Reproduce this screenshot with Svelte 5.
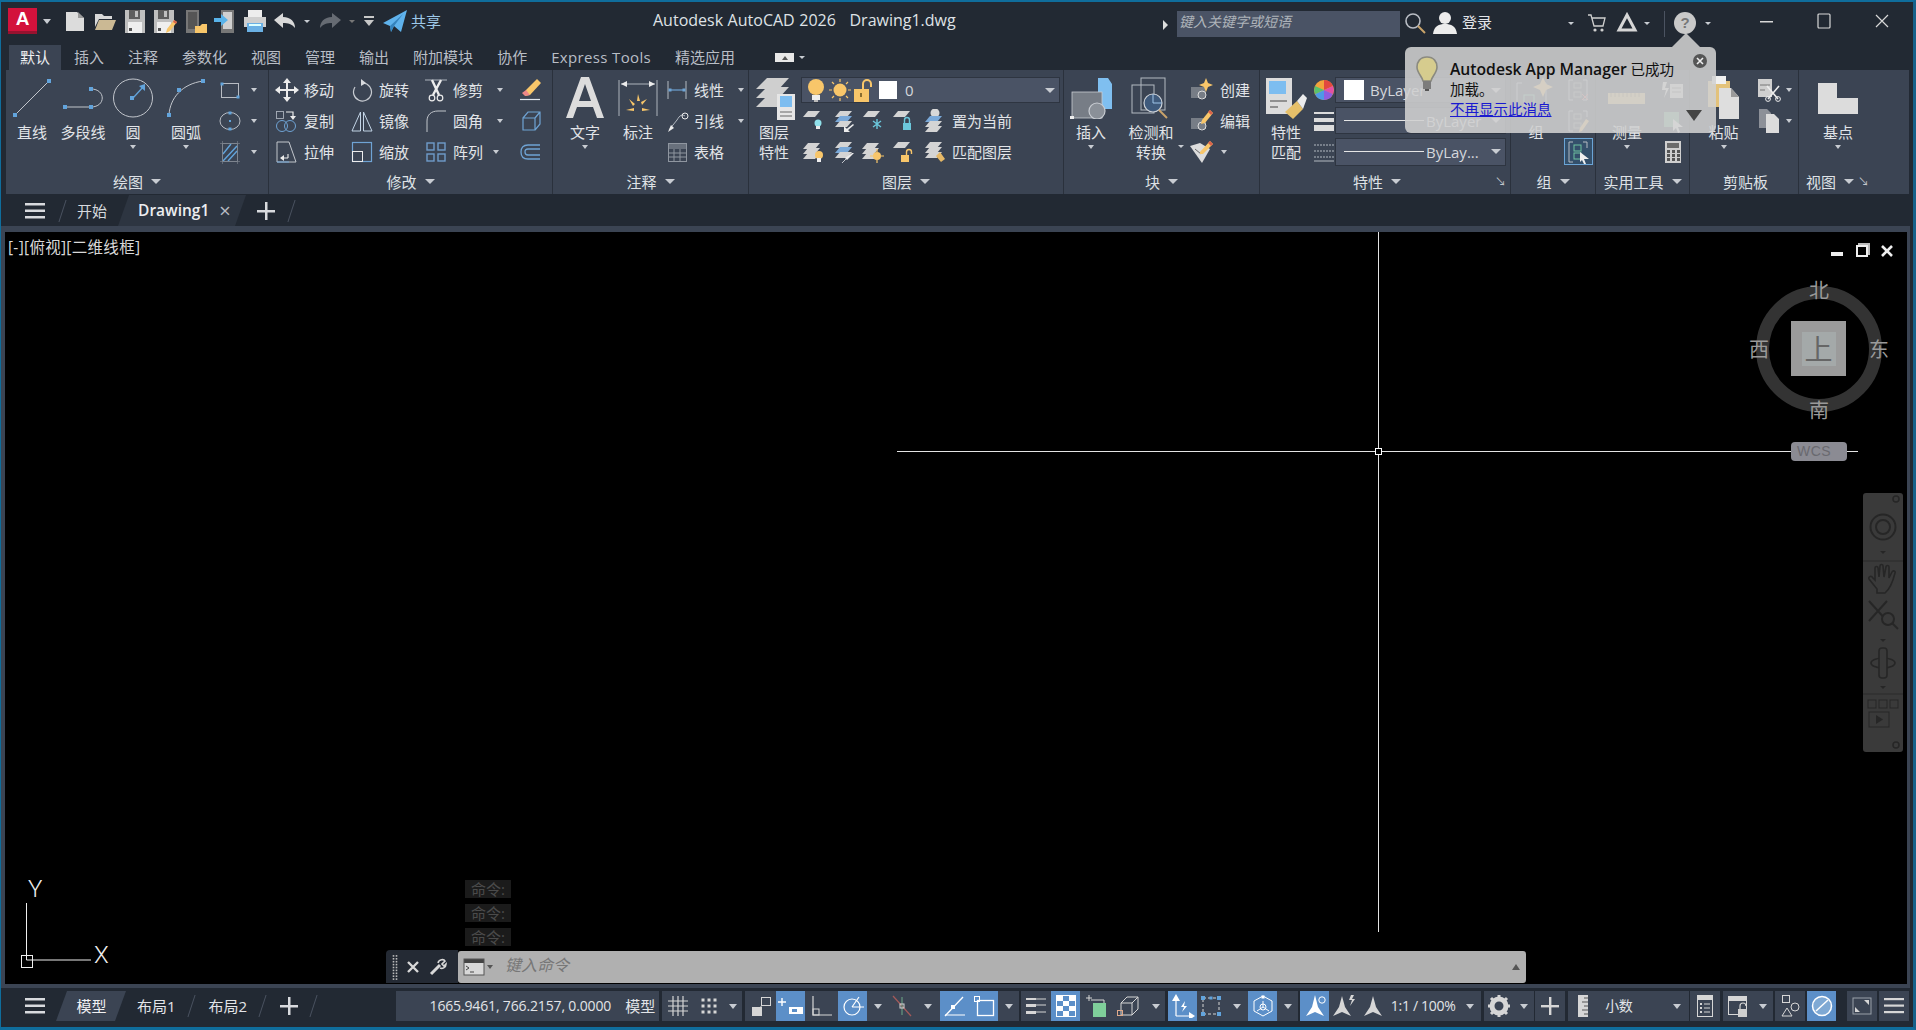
<script>
const G='#d4d4d4',B='#62a4dc',W='#ececec',L='#aeb4bd',Y='#f8c66a',D='#23262c';
const r=(x,y,w,h,c=G)=>`<rect x="${x}" y="${y}" width="${w}" height="${h}" fill="${c}"/>`;
const o=(x,y,w,h,s=L,sw=1)=>`<rect x="${x}" y="${y}" width="${w}" height="${h}" fill="none" stroke="${s}" stroke-width="${sw}"/>`;
const p=(d,s=L,sw=1)=>`<path d="${d}" fill="none" stroke="${s}" stroke-width="${sw}"/>`;
const f=(d,c=G)=>`<path d="${d}" fill="${c}"/>`;
const t=(x,y,c=B,s=4)=>r(x-s/2,y-s/2,s,s,c);
const c=(x,y,R,s=L,sw=1,fl='none')=>`<circle cx="${x}" cy="${y}" r="${R}" fill="${fl}" stroke="${s}" stroke-width="${sw}"/>`;
const sheet=(x,y,col=G)=>f(`M${x+5} ${y}H${x+17}L${x+12} ${y+6}H${x}Z`,col);
const stack=(x,y,col=G,top=G)=>sheet(x,y,top)+sheet(x,y+5,col)+sheet(x,y+10,G);
const bulb=(x,y,col='#8fe0ea')=>c(x,y,3.5,col,0,col)+r(x-2,y+3,4,3,'#e8e8e8');
const lock=(x,y,col='#6cc8dc')=>r(x-4,y,8,7,col)+p(`M${x-2.5} ${y}V${y-3}a2.5 2.5 0 0 1 5 0V${y}`,col,1.4);
const ulock=(x,y,col=Y)=>r(x-4,y,8,7,col)+p(`M${x+1.5} ${y}V${y-3}a2.5 2.5 0 0 1 5 0V${y-1}`,col,1.4);
const floppy=r(1,2,20,23,'#bfbfbf')+r(5,2,11,9,'#5d5d5d')+r(11,3,3,6,'#bfbfbf')+r(4,14,14,11,'#efefef')+r(5,20,3,3,'#555');
const I={
 new:[20,24,f('M1 3H12L19 9V22H1Z','#dcdcdc')+f('M13 3L19 9H13Z','#9a9a9a')],
 open:[24,24,f('M2 5H9L11 7H19V10H6L2 18Z','#d8d8d8')+f('M6 11H23L19 21H2Z','#cbb994')],
 save:[22,26,floppy],
 saveas:[24,26,floppy+f('M14 21L21 12L24 14L17 23L13 25Z',Y)+f('M21 12L24 14L23 16L20 14Z','#d9634b')],
 pub:[24,26,r(3,2,13,23,'#777')+r(5,4,9,17,'#555')+f('M12 18H17L19 16H24V25H12Z',Y)],
 imp:[24,26,r(8,2,13,23,'#777')+r(10,4,9,17,'#d0d0d0')+f('M1 10H8V6L15 12L8 18V14H1Z','#59b3ea')],
 print:[24,24,r(5,1,14,7,'#ededed')+r(1,8,22,10,'#cfcfcf')+r(4,14,16,9,'#6ab0e4')+r(6,15,12,2,'#dff')],
 undo:[24,20,f('M1 9L10 2V6C18 6 22 11 22 17C19 13 15 12 10 12V17Z','#d9d9d9')],
 redo:[24,20,f('M23 9L14 2V6C6 6 2 11 2 17C5 13 9 12 14 12V17Z','#666b73')],
 more:[12,12,r(1,1,10,2,'#c8c8c8')+f('M1 5H11L6 11Z','#c8c8c8')],
 share:[24,24,f('M0 14L24 1L18 23L11 17L8 23L7 17Z','#5fb2ec')+f('M7 17L20 5L11 17L8 23Z','#3583bd')],
 search:[24,24,c(10,10,7,'#b9bdc4',1.6)+p('M15 15L22 22','#c9a36a',2)],
 user:[26,26,c(13,8,6,W,0,W)+f('M1 24C2 16 7 14 13 14C19 14 24 16 25 24Z',W)],
 cart:[20,20,p('M1 2H4L7 13H16L18 5H5','#cfcfcf',1.3)+c(8,17,1.6,'#cfcfcf',0,'#cfcfcf')+c(15,17,1.6,'#cfcfcf',0,'#cfcfcf')],
 tri:[22,22,p('M11 3L19 18H3Z','#d6d6d6',3)],
 wmin:[14,14,r(1,7,13,1.5,'#d8d8d8')],
 wmax:[14,16,`<rect x="1" y="1" width="12" height="14" rx="1" fill="none" stroke="#d8d8d8" stroke-width="1.2"/>`],
 wclose:[14,14,p('M1 1L13 13M13 1L1 13','#d8d8d8',1.2)],
 hamb:[20,16,r(0,0,20,2.5,'#d8dade')+r(0,6.5,20,2.5,'#d8dade')+r(0,13,20,2.5,'#d8dade')],
 plus:[18,18,r(8,0,2.5,18,'#d8dade')+r(0,8,18,2.5,'#d8dade')],
 line:[38,38,p('M2 36L36 2','#c2c6cc')+t(2,36)+t(36,2)],
 pline:[40,24,p('M2 21H28M28 3C43 3 43 21 28 21','#c2c6cc')+t(2,21)+t(28,21)+t(28,3)],
 circle:[42,42,`<ellipse cx="21" cy="21" rx="19.5" ry="19" fill="none" stroke="#c2c6cc"/>`+p('M21 21L32 9',B,1.3)+f('M33 7L33 14L27 9Z',B)+t(20,21)],
 arc:[38,38,p('M2 36C3 19 15 5 36 2','#c2c6cc')+t(2,36)+t(12,11)+t(36,2)],
 rect:[24,24,o(3.5,5.5,17,14,'#b8bcc3')+t(4,6,B,3)+t(20,19,B,3)],
 ell:[24,24,`<ellipse cx="12" cy="12" rx="10" ry="8.5" fill="none" stroke="#b8bcc3"/>`+t(12,4,B,3)+t(12,12,B,2)+t(12,20,B,3)],
 hatch:[24,24,o(4.5,3.5,15,18,'#8f96a0')+p('M5 14L13 4M5 21L19 6M10 21L19 11',B,1.4)+p('M2 3.5H22M2 21.5H22M4.5 1V24M19.5 1V24','#777e88',.7)],
 move:[24,24,p('M12 3V21M3 12H21',W,2)+f('M12 0L16 5H8ZM12 24L16 19H8ZM0 12L5 8V16ZM24 12L19 8V16Z',W)],
 rot:[24,24,p('M13 5A9 9 0 1 1 5 9','#c8ccd2',1.2)+f('M11 1L16 5L11 8Z','#d8dade')],
 trim:[24,24,p('M1 2H23','#8f96a0',1.4)+p('M8 2L15 17M17 2L9 17',W,2.4)+c(8,20,2.8,W,1.2)+c(16,20,2.8,W,1.2)],
 copy:[24,24,o(1.5,2.5,7,7,'#a9b0ba',.9)+p('M11 3H18V7',W,1.2)+f('M15 7H21L18 11Z',W)+c(7,17,5.5,'#6fa3d4')+c(15,17,5.5,'#6fa3d4')],
 mirror:[24,24,p('M10.5 3L2 22H10.5ZM13.5 3L22 22H13.5Z','#c2d4e6')],
 fill:[24,24,p('M3 23V12C3 6 7 2 14 2H22','#c2c6cc')],
 stretch:[24,24,p('M2 2H14L21 22H2Z','#c2c6cc')+p('M2 22H14','#6fa3d4')+p('M6 18H13M13 14V18',W,1.1)+f('M5 18L9 15V21Z',W)],
 scale:[24,24,o(2.5,2.5,19,19,'#6fa3d4',1.2)+o(2.5,11.5,10,10,W,1)],
 array:[24,24,o(3,3,7,7,'#6f9ccb',1.4)+o(14,3,7,7,'#6f9ccb',1.4)+o(3,14,7,7,'#6f9ccb',1.4)+o(14,14,7,7,'#6f9ccb',1.4)],
 erase:[24,24,f('M19 1L23 5L12 17L7 18L8 12Z',Y)+f('M8 12L12 17L7 18L4 15Z','#e88')+p('M2 21.5H22','#dfe6ee',1.2)],
 box:[24,24,p('M5 9V21H17V9ZM5 9L10 3H22V15L17 21M17 9L22 3','#6fa3d4',1.2)],
 offset:[24,24,p('M22 5H10C5 5 3 8 3 12C3 16 5 19 10 19H22M22 9H10C8 9 7 10 7 12C7 14 8 15 10 15H22','#6fa3d4',1.3)],
 text:[38,44,`<path d="M0 42L15 1H23L38 42H31L27 31H11L7 42ZM13 25H25L19 8Z" fill="#dcdcdc"/>`],
 dim:[40,44,p('M1 4V40M39 4V40','#aeb4bd')+p('M3 8H37','#aeb4bd')+f('M3 8L9 5V11ZM37 8L31 5V11Z',W)+f('M20 18L22 25L19 25ZM11 23L17 28L15 30ZM29 23L24 29L23 26ZM8 34L16 32L16 35ZM32 34L24 32L24 35Z',Y)],
 linear:[24,24,p('M3 3V21M21 3V21','#b4bac2')+p('M5 12H19','#6fa3d4',1.2)+t(5,12,'#6fa3d4',3)+t(19,12,'#6fa3d4',3)],
 leader:[24,24,p('M4 21L12 11C15 6 17 5 20 7','#b4bac2')+c(20,7,3,W,1)+f('M3 23L6 16L9 19Z',W)],
 table:[24,24,o(3.5,3.5,18,18,'#8f96a0',1)+r(4,4,17,5,'#68707c')+p('M4 13H21M4 17H21M9 9V21M15 9V21','#8f96a0')],
 lprop:[42,44,f('M14 2H36L26 13H3Z','#cfcfcf')+f('M14 11H36L26 22H3Z','#cfcfcf')+f('M14 20H36L26 31H3Z','#cfcfcf')+r(24,18,18,26,'#e6e6e6')+r(27,20,12,11,'#7dbdf0')+p('M27 36H39M27 40H39','#666')],
 bulbY:[24,26,c(12,10,8,Y,0,Y)+r(8,18,8,5,'#eee')+r(10,23,4,2,'#bbb')],
 sun:[24,24,c(12,12,6.5,Y,0,Y)+p('M12 1V4M12 20V23M1 12H4M20 12H23M4 4L6 6M18 18L20 20M20 4L18 6M4 20L6 18',Y,1.2)],
 ulockY:[24,26,r(2,12,15,13,Y)+r(8,16,2,4,'#8a6d30')+p('M11 12V7a4 4 0 0 1 8 0V10',Y,2)],
 l1:[24,24,sheet(1,2)+bulb(16,14)],
 l2:[24,24,stack(3,2,'#7aa9d9')+f('M12 22L21 15L22 16L15 22Z',W)+f('M12 17V23H18Z',W)],
 l3:[24,24,sheet(1,2)+p('M15 10V20M11 12L19 18M19 12L11 18','#6cc8dc',1.4)],
 l4:[24,24,sheet(1,2)+lock(15,14)],
 l5:[24,24,c(13,4,4.5,'#d8d8d8',0,'#d8d8d8')+sheet(3,7,'#7aa9d9')+sheet(3,12)+sheet(3,17)],
 l6:[24,24,stack(1,3)+c(17,15,4,Y,0,Y)+r(15,18,4,4,'#eee')],
 l7:[24,24,stack(3,2,'#7aa9d9')+f('M22 13L15 20L13 18L20 13Z',W)+p('M14 19L10 23','#c2c6cc')],
 l8:[24,24,stack(0,3)+c(15,16,4,Y,0,Y)+p('M15 9V12M15 20V23M8 16H11M19 16H22',Y,1.2)],
 l9:[24,24,sheet(1,2)+ulock(13,15)],
 l10:[24,24,stack(3,2)+f('M14 16L18 12L23 19L19 22Z','#e6b866')],
 ins:[42,42,f('M28 1H38L42 7V32H28Z','#7fbff0')+r(2,15,30,26,'#777d86')+o(2,15,30,26,'#c8ccd2',.8)+c(27,34,8,'#c8ccd2',1.2,'#8a9098')+t(2,41,W,4)],
 detect:[40,42,o(10,1,24,32,'#b4bac2')+o(1,8,22,28,'#b4bac2')+c(22,26,9,'#cdd2d8',1.2,'#3f5a7c')+p('M22 26V17M22 26H31','#9fc4e8')+p('M28 33L36 41','#c9a36a',2)],
 create:[24,24,r(2,9,15,11,'#777d86')+c(13,17,4,'#ddd',1)+f('M17 0L19 5L24 7L19 9L17 14L15 9L10 7L15 5Z',Y)],
 edit:[24,24,r(2,9,15,11,'#777d86')+c(13,17,4,'#ddd',1)+f('M21 1L24 4L16 14L12 15L13 11Z',Y)+f('M21 1L24 4L22 6L19 3Z','#d9634b')],
 blk3:[24,24,f('M1 6L11 3L21 9L13 23Z','#dcdcdc')+p('M6 9L12 14','#666')+f('M21 1L24 4L14 14L11 14L11 12Z',Y)+f('M21 1L24 4L22 6L19 3Z','#d9634b')],
 match:[42,42,r(1,1,26,36,'#dcdcdc')+r(4,4,17,13,'#7dbdf0')+p('M5 24H22M5 30H13','#777',1.5)+f('M20 35L32 24L38 32L28 42Z','#e6c06a')+f('M32 24L38 17L42 21L38 32Z',W)],
 wheel:[22,24,`<circle cx="11" cy="12" r="10" fill="#f2a33c"/>`+f('M11 12L11 2A10 10 0 0 1 20 8Z','#e2483f')+f('M11 12L20 8A10 10 0 0 1 20 16Z','#e24fa6')+f('M11 12L20 16A10 10 0 0 1 11 22Z','#8f5de0')+f('M11 12L11 22A10 10 0 0 1 2 16Z','#4e9ae6')+f('M11 12L2 16A10 10 0 0 1 2 8Z','#58c26c')],
 lw:[22,24,r(1,3,20,2,'#dcdcdc')+r(1,9,20,4,'#dcdcdc')+r(1,16,20,6,'#dcdcdc')],
 lt:[22,24,p('M1 5H21M1 11H21M1 17H21','#b4bac2',1.2).replace(/stroke-width="1.2"/,'stroke-width="1.2" stroke-dasharray="2 1"')+p('M1 21H21','#b4bac2',1)],
 grp:[42,46,p('M7 8H2V34H7M26 8H31V34H26','#b4bac2')+o(9,20,10,10,'#6fc2a0')+f('M28 2L31 9L38 12L31 15L28 22L25 15L18 12L25 9Z',Y)],
 g1:[24,24,p('M7 2H3V22H7M17 2H21V22H17','#b4bac2')+o(8,5,7,5,'#8a9098')+o(8,14,7,5,'#8a9098')+p('M16 16L22 22M22 16L16 22','#e06a6a')],
 g2:[24,24,p('M7 2H3V22H7M17 2H21V8','#b4bac2')+o(8,5,7,5,'#8a9098')+o(8,14,7,5,'#8a9098')+f('M20 10L23 12L16 22L13 23L14 19Z',Y)],
 g3:[24,24,p('M7 2H3V22H7M17 2H21V8','#b4bac2')+o(8,5,7,6,'#6fc2a0')+o(8,13,7,6,'#6fc2a0')+f('M14 12L23 19L18 19L20 24L18 24L16 20L14 22Z','#f0f0f0')],
 ruler:[38,14,r(0,2,37,11,'#e6c57a')+p('M3 2V6M7 2V6M11 2V6M15 2V6M19 2V6M23 2V6M27 2V6M31 2V6','#8a7a55')],
 u1:[24,24,f('M2 4H6L4 10H8L3 20L5 12H1Z',W)+r(9,6,13,14,'#d8d8d8')+p('M11 10H20M11 14H20','#777')],
 u2:[24,24,r(3,3,15,15,'#6fa98a')+f('M12 10L22 18L17 18L19 23L17 24L15 19L12 22Z','#f0f0f0')],
 calc:[18,24,r(1,1,16,22,'#cfcfcf')+r(3,3,12,5,'#6b6b6b')+r(3,10,3,3,'#555')+r(8,10,3,3,'#555')+r(13,10,3,3,'#555')+r(3,14,3,3,'#555')+r(8,14,3,3,'#555')+r(13,14,3,3,'#555')+r(3,18,3,3,'#555')+r(8,18,3,3,'#555')+r(13,18,3,3,'#555')],
 paste:[34,46,r(1,6,22,26,'#e3c27a')+r(5,1,14,8,'#f0f0f0')+f('M12 13H24L32 22V44H12Z','#dedede')+f('M24 13L32 22H24Z','#9a9a9a')],
 cut:[24,24,r(1,1,14,18,'#cfcfcf')+p('M3 7H13M3 12H8','#777')+p('M10 8L21 21M22 8L11 21',W,1.6)+c(11,21,2.4,W,1)+c(21,21,2.4,W,1)],
 cpy:[24,26,f('M2 1H10L14 5V20H2Z','#8c9098')+f('M9 6H17L22 11V25H9Z','#dcdcdc')],
 base:[40,31,f('M0 0H19V15H40V31H0Z','#dcdcdc')],
 sgrid:[24,24,p('M7 2V22M12 2V22M17 2V22M2 7H22M2 12H22M2 17H22','#d6d6d6',1.2)],
 ssnap:[24,24,[6,12,18].map(y=>[6,12,18].map(x=>t(x,y,'#d6d6d6',3)).join('')).join('')],
 ssteps:[24,24,r(3,13,10,9,'#d6d6d6')+o(12.5,3.5,9,8,'#d6d6d6',1)+p('M12 12V14','#d6d6d6')],
 sinf:[26,24,p('M4 4V12M0 8H8','#fff',1.4)+r(11,13,14,7,'#fff')+r(14,15,5,3,'#5c8fc8')],
 sortho:[24,24,p('M3 2V21H22','#d6d6d6',1.2)+o(3,15,6,6,'#d6d6d6')],
 spolar:[24,24,c(11,13,8,'#fff',1.2)+p('M11 13L18 3M11 13H23','#fff',1.2)],
 siso:[24,24,p('M3 2L21 22','#a55a5a',1.2)+p('M12 3V21','#6fa98a',1)+o(10,10,4,4,'#d6d6d6')],
 strack:[24,24,p('M2 22L20 3','#fff',1.3)+p('M2 21H22','#fff',1)+t(10,13,'#fff',4)],
 sosnap:[24,24,o(5.5,6.5,16,15,'#fff',1.3)+o(2.5,2.5,5,5,'#fff',1)],
 slw:[24,22,r(2,3,10,2,'#d6d6d6')+p('M12 4H22','#d6d6d6')+r(2,9,10,3,'#d6d6d6')+p('M12 10H22','#d6d6d6')+r(2,16,10,3,'#d6d6d6')+p('M12 17H22','#d6d6d6')],
 strans:[22,24,r(1,1,20,22,'#fff')+[0,1,2,3].map(i=>[0,1,2].map(k=>(i+k)%2?r(2+k*6,2+i*5,6,5,'#5c8fc8'):'').join('')).join('')],
 ssel:[24,24,p('M5 1V7M2 4H8','#d6d6d6')+p('M7 6H20V9','#d6d6d6')+r(9,9,13,14,'#7fcf9a')],
 s3d:[26,24,p('M5 21V9L11 3H22V15L16 21Z','#d6d6d6')+p('M5 9H16V21M16 9L22 3','#d6d6d6')+o(1.5,16.5,5,5,'#e0a98a')],
 sducs:[24,24,p('M5 22V5M5 22H22','#fff',1.2)+f('M5 0L9 7H1ZM24 22L18 18V26Z','#fff')+f('M14 7L10 13H13L11 18L16 12H13Z','#fff')],
 sgizmo:[24,24,o(4,4,16,16,'#d6d6d6',1).replace('stroke-width="1"','stroke-width="1" stroke-dasharray="3 2"')+t(4,4)+t(20,4)+t(4,20)+t(20,20)+t(12,4,B,3)],
 sgiz3:[24,24,p('M12 2L21 7V17L12 22L3 17V7Z','#fff',1)+p('M12 7V13L6 17M12 13L18 17','#fff',1)+c(12,13,3,'#fff',1)+t(12,3,'#fff',3)],
 anno:[24,24,f('M12 1L15 13L21 22L12 18L3 22L9 13Z','#fff')+c(19,6,3.2,'#fff',1)],
 anno2:[24,24,f('M10 2L13 13L19 22L10 18L1 22L7 13Z','#d6d6d6')+f('M19 1L17 6H20L18 12L23 5H20L22 1Z','#d6d6d6')],
 anno3:[24,24,f('M12 2L15 13L21 22L12 18L3 22L9 13Z','#d6d6d6')],
 gear:[24,24,c(12,12,7,'#d6d6d6',5)+p('M12 1V5M12 19V23M1 12H5M19 12H23M4 4L7 7M17 17L20 20M20 4L17 7M4 20L7 17','#d6d6d6',3)],
 splus:[20,20,r(9,1,2.4,18,'#d6d6d6')+r(1,9,18,2.4,'#d6d6d6')],
 sruler:[12,24,r(1,1,10,22,'#d6d6d6')+p('M7 4H11M5 8H11M7 12H11M5 16H11M7 20H11','#555')],
 sprop:[18,24,o(1.5,1.5,15,21,'#d6d6d6',1)+r(2,2,14,4,'#d6d6d6')+p('M8 10H14M8 14H14M8 18H14','#d6d6d6')+t(5,10,'#d6d6d6',2)+t(5,14,'#d6d6d6',2)+t(5,18,'#d6d6d6',2)],
 siso2:[24,24,o(2.5,2.5,18,18,'#d6d6d6',1)+r(3,3,17,4,'#d6d6d6')+r(12,15,9,8,'#cfcfcf')+p('M14 15V12a3 3 0 0 1 6 0','#d6d6d6',1.2)],
 sobj:[22,24,o(3.5,1.5,7,7,'#d6d6d6')+c(16,13,4,'#d6d6d6')+p('M8 14L13 22H3Z','#d6d6d6')],
 sperf:[24,24,`<circle cx="12" cy="12" r="9.5" fill="#7fa9d4" stroke="#fff" stroke-width="1.5"/>`+p('M6 17L18 6','#fff',1.5)],
 sfull:[20,18,o(1,1,18,16,'#9aa0a9',1)+f('M3 15L3 10L8 15ZM17 3L17 8L12 3Z','#d6d6d6')],
 shamb:[20,16,r(0,0,20,2.2,'#d6d6d6')+r(0,6.5,20,2.2,'#d6d6d6')+r(0,13,20,2.2,'#d6d6d6')],
 cmdic:[22,18,r(1,1,20,16,'#d8d8d8')+r(1,1,20,4,'#444')+o(1,1,20,16,'#555')+p('M3 8L6 10L3 12M7 14H11','#444')],
 cmdx:[12,12,p('M1 1L11 11M11 1L1 11','#d8d8d8',2.4)],
 wrench:[18,18,p('M2 16L11 7','#d8d8d8',3)+p('M9 5C10 1 15 1 16 3L13 6L15 8L17 6C17 10 13 11 11 10','#d8d8d8',1.6)],
 grip:[6,26,[1,2,3,4,5,6,7,8,9].map(i=>t(1.5,i*2.9-1,'#bbb',1.6)+t(4.5,i*2.9-1,'#bbb',1.6)).join('')],
};
const status=[
 {gap:0,items:[{w:38,text:'模型'}]},
 {gap:3,items:[{w:31,i:'sgrid'},{w:31,i:'ssnap'},{w:18,ar:1}]},
 {gap:3,items:[{w:31,i:'ssteps'},{w:29,i:'sinf',on:1},{w:33,i:'sortho'},{w:29,i:'spolar',on:1},{w:22,ar:1},{w:26,i:'siso'},{w:25,ar:1},{w:29,i:'strack',on:1},{w:29,i:'sosnap',on:1},{w:21,ar:1}]},
 {gap:2,items:[{w:30,i:'slw'},{w:29,i:'strans',on:1},{w:31,i:'ssel'},{w:35,i:'s3d'},{w:19,ar:1}]},
 {gap:3,items:[{w:29,i:'sducs',on:1},{w:28,i:'sgizmo'},{w:23,ar:1},{w:29,i:'sgiz3',on:1},{w:21,ar:1}]},
 {gap:2,items:[{w:29,i:'anno',on:1},{w:29,i:'anno2'},{w:29,i:'anno3'},{w:72,label:'1:1 / 100%'},{w:22,ar:1}]},
 {gap:3,items:[{w:30,i:'gear'},{w:20,ar:1}]},
 {gap:1,items:[{w:30,i:'splus'}]},
 {gap:3,items:[{w:30,i:'sruler'},{w:7},{w:60,label:'小数',left:1},{w:24,ar:1}]},
 {gap:1,items:[{w:30,i:'sprop'}]},
 {gap:3,items:[{w:30,i:'siso2'},{w:20,ar:1}]},
 {gap:2,items:[{w:30,i:'sobj'}]},
 {gap:2,items:[{w:29,i:'sperf',on:1}]},
 {gap:11,items:[{w:30,i:'sfull'}]},
 {gap:2,items:[{w:30,i:'shamb'}]},
];
</script>

{#snippet ic(n)}<svg class="i" width={I[n][0]} height={I[n][1]} viewBox={`0 0 ${I[n][0]} ${I[n][1]}`}>{@html I[n][2]}</svg>{/snippet}
{#snippet lg(n,label,arrow=false)}
 <div class="lg"><div class="lgi">{@render ic(n)}</div><div class="lb">{@html label}</div>{#if arrow}<i class="ar a7"></i>{/if}</div>
{/snippet}
{#snippet sm(n,label='',arrow=0)}
 <div class="sm"><span class="si">{@render ic(n)}</span>{#if label}<span class="sl">{label}</span>{/if}{#if arrow}<i class="ar a7 sa" class:near={arrow===2}></i>{/if}</div>
{/snippet}
{#snippet title(label,launcher=false)}
 <div class="ptitle"><span>{label}</span><i class="ar a10"></i>{#if launcher}<span class="launch">↘</span>{/if}</div>
{/snippet}

<div class="app">
 <header class="tbar">
  <div class="qat">
   <div class="logo">A</div>
   <span class="slot s20"><i class="ar a9"></i></span>
   {#each ['new','open','save','saveas','pub','imp','print','undo'] as n,idx}
    <span class="slot s30" class:first={idx===0}>{@render ic(n)}</span>
   {/each}
   <span class="slot s14"><i class="ar a6"></i></span>
   <span class="slot s32">{@render ic('redo')}</span>
   <span class="slot s12"><i class="ar a6 dim"></i></span>
   <span class="slot s22">{@render ic('more')}</span>
   <span class="slot s30">{@render ic('share')}</span>
   <span class="sharet">共享</span>
  </div>
  <div class="apptitle">Autodesk AutoCAD 2026&nbsp;&nbsp;&nbsp;Drawing1.dwg</div>
  <span class="slot s14"><i class="rt"></i></span>
  <div class="searchbox">键入关键字或短语</div>
  <span class="slot s30 up1">{@render ic('search')}</span>
  <span class="slot s30 up1">{@render ic('user')}</span>
  <span class="login">登录</span>
  <span class="slot s18"><i class="ar a6"></i></span>
  <span class="slot s34 up1">{@render ic('cart')}</span>
  <span class="slot s26 up1">{@render ic('tri')}</span>
  <span class="slot s14"><i class="ar a6"></i></span>
  <span class="slot s20"><i class="vsep"></i></span>
  <span class="slot s22 up1"><span class="help">?</span></span>
  <span class="slot s24"><i class="ar a6"></i></span>
  <span class="gapw"></span>
  <span class="slot s58 up2">{@render ic('wmin')}</span>
  <span class="slot s58 up2">{@render ic('wmax')}</span>
  <span class="slot s58 up2">{@render ic('wclose')}</span>
 </header>

 <nav class="rtabs">
  {#each ['默认','插入','注释','参数化','视图','管理','输出','附加模块','协作','Express Tools','精选应用'] as tb,idx}
   <span class="rtab" class:active={idx===0} class:latin={idx===9}>{tb}</span>
  {/each}
  <span class="tabswitch"><i class="tsw"><i class="ar a5up"></i></i><i class="ar a6"></i></span>
 </nav>

 <div class="ribbon">
  <section class="panel draw">
   <div class="body">
    {@render lg('line','直线')}
    {@render lg('pline','多段线')}
    {@render lg('circle','圆',true)}
    {@render lg('arc','圆弧',true)}
    <div class="smcol">
     <div class="sm"><span class="si">{@render ic('rect')}</span><i class="ar a7 far"></i></div>
     <div class="sm"><span class="si">{@render ic('ell')}</span><i class="ar a7 far"></i></div>
     <div class="sm"><span class="si">{@render ic('hatch')}</span><i class="ar a7 far"></i></div>
    </div>
   </div>
   {@render title('绘图')}
  </section>

  <section class="panel modify">
   <div class="body">
    {@render sm('move','移动')}{@render sm('rot','旋转')}{@render sm('trim','修剪',1)}{@render sm('erase')}
    {@render sm('copy','复制')}{@render sm('mirror','镜像')}{@render sm('fill','圆角',1)}{@render sm('box')}
    {@render sm('stretch','拉伸')}{@render sm('scale','缩放')}{@render sm('array','阵列',2)}{@render sm('offset')}
   </div>
   {@render title('修改')}
  </section>

  <section class="panel annot">
   <div class="body">
    {@render lg('text','文字',true)}
    {@render lg('dim','标注')}
    <div class="smcol">{@render sm('linear','线性',1)}{@render sm('leader','引线',1)}{@render sm('table','表格')}</div>
   </div>
   {@render title('注释')}
  </section>

  <section class="panel layers">
   <div class="body">
    {@render lg('lprop','图层<br>特性')}
    <div class="smcol">
     <div class="combo c26 layercombo">
      {@render ic('bulbY')}{@render ic('sun')}{@render ic('ulockY')}<i class="swatch s18w"></i><span class="ctext">0</span><i class="ar a10 end"></i>
     </div>
     <div class="lrow">
      {#each ['l1','l2','l3','l4','l5'] as n}<span class="lslot">{@render ic(n)}</span>{/each}<span class="sl ll">置为当前</span>
     </div>
     <div class="lrow">
      {#each ['l6','l7','l8','l9','l10'] as n}<span class="lslot">{@render ic(n)}</span>{/each}<span class="sl ll">匹配图层</span>
     </div>
    </div>
   </div>
   {@render title('图层')}
  </section>

  <section class="panel block">
   <div class="body">
    {@render lg('ins','插入',true)}
    <div class="lg"><div class="lgi">{@render ic('detect')}</div><div class="lb">检测和<br>转换</div><i class="ar a6 detarr"></i></div>
    <div class="smcol">{@render sm('create','创建')}{@render sm('edit','编辑')}{@render sm('blk3','',1)}</div>
   </div>
   {@render title('块')}
  </section>

  <section class="panel props">
   <div class="body">
    {@render lg('match','特性<br>匹配')}
    <div class="smcol ctr">{@render ic('wheel')}{@render ic('lw')}{@render ic('lt')}</div>
    <div class="smcol">
     <div class="combo c26"><i class="swatch s20w"></i><span class="ctext">ByLayer</span><i class="ar a10 end"></i></div>
     <div class="combo c27"><i class="cline"></i><span>ByLayer</span><i class="ar a10 end"></i></div>
     <div class="combo c28"><i class="cline"></i><span>ByLay...</span><i class="ar a10 end"></i></div>
    </div>
   </div>
   {@render title('特性',true)}
  </section>

  <section class="panel group">
   <div class="body">
    {@render lg('grp','组')}
    <div class="smcol ctr"><span class="gs">{@render ic('g1')}</span><span class="gs">{@render ic('g2')}</span><span class="gs sel">{@render ic('g3')}</span></div>
   </div>
   {@render title('组')}
  </section>

  <section class="panel util">
   <div class="body">
    {@render lg('ruler','测量',true)}
    <div class="smcol ctr"><span class="gs">{@render ic('u1')}</span><span class="gs">{@render ic('u2')}</span><span class="gs">{@render ic('calc')}</span></div>
   </div>
   {@render title('实用工具')}
  </section>

  <section class="panel clip">
   <div class="body">
    {@render lg('paste','粘贴',true)}
    <div class="smcol">{@render sm('cut','',1)}{@render sm('cpy','',1)}</div>
   </div>
   <div class="ptitle"><span>剪贴板</span></div>
  </section>

  <section class="panel view">
   <div class="body">{@render lg('base','基点',true)}</div>
   {@render title('视图',true)}
  </section>
 </div>

 <div class="doctabs">
  <span class="hamb">{@render ic('hamb')}</span>
  <i class="slash"></i>
  <span class="dt">开始</span>
  <span class="dactive"><b>Drawing1</b><em>×</em></span>
  <span class="dplus">{@render ic('plus')}</span>
  <i class="slash"></i>
 </div>

 <main class="frame">
  <div class="canvas">
   <div class="vlabel">[-][俯视][二维线框]</div>
   <div class="vctl">
    <i class="vmin"></i><i class="vres"></i><svg width="12" height="12" viewBox="0 0 12 12"><path d="M1 1L11 11M11 1L1 11" stroke="#eee" stroke-width="2.6"/></svg>
   </div>

   <div class="chv"></div><div class="chh"></div><div class="pick"></div>

   <div class="cube">
    <div class="ring"></div>
    <div class="face"><div class="facein">上</div></div>
    <span class="dir n">北</span><span class="dir w">西</span><span class="dir e">东</span><span class="dir s">南</span>
   </div>
   <div class="wcs">WCS</div>

   <svg class="navbar" width="40" height="259" viewBox="0 0 40 259">
    <rect width="40" height="259" rx="3" fill="#3a3a3a"/>
    <circle cx="33" cy="6" r="3" fill="none" stroke="#262626" stroke-width="1.5"/><circle cx="33" cy="252" r="3" fill="none" stroke="#262626" stroke-width="1.5"/>
    <circle cx="20" cy="34" r="12.5" fill="none" stroke="#262626" stroke-width="2"/><circle cx="20" cy="34" r="7" fill="none" stroke="#262626" stroke-width="2"/>
    <path d="M17 58H23L20 61Z" fill="#262626"/><path d="M0 68H40" stroke="#2a2a2a"/>
    <path d="M14 96L6 86C5 84 8 82 10 85L12 87L12 75C12 73 15 73 15 75L16 84L17 73C17 71 20 71 20 73L21 84L23 74C23 72 26 72 26 74L26 85L29 79C30 77 33 78 32 80C30 88 27 96 22 100H14Z" fill="none" stroke="#262626" stroke-width="1.6"/>
    <path d="M6 108L24 128M24 108L6 128" stroke="#262626" stroke-width="2"/><circle cx="25" cy="126" r="6" fill="#3a3a3a" stroke="#262626" stroke-width="2"/><path d="M29 130L35 136" stroke="#262626" stroke-width="2"/>
    <path d="M17 146H23L20 149Z" fill="#262626"/>
    <ellipse cx="20" cy="170" rx="12" ry="5" fill="none" stroke="#262626" stroke-width="1.6"/><rect x="16" y="155" width="8" height="30" rx="3" fill="#3a3a3a" stroke="#262626" stroke-width="1.6"/>
    <path d="M17 193H23L20 196Z" fill="#262626"/><path d="M0 201H40" stroke="#2a2a2a"/>
    <rect x="5" y="207" width="8" height="8" fill="none" stroke="#262626"/><rect x="16" y="207" width="8" height="8" fill="none" stroke="#262626"/><rect x="27" y="207" width="8" height="8" fill="none" stroke="#262626"/>
    <rect x="6" y="219" width="20" height="15" fill="none" stroke="#262626"/><path d="M13 222L20 226.5L13 231Z" fill="#262626"/>
   </svg>

   <svg class="ucs" width="92" height="90" viewBox="0 0 92 90">
    <path d="M6.5 3V60M6.5 60H71" stroke="#eee" stroke-width="1" fill="none"/>
    <rect x="1.5" y="55.5" width="11" height="12" fill="none" stroke="#eee"/>
    <text x="8" y="-3" class="axis">Y</text><text x="74" y="63" class="axis">X</text>
   </svg>

   <div class="hist"><span>命令:</span><span>命令:</span><span>命令:</span></div>

   <div class="cmd">
    <div class="cmdh"><span class="cg">{@render ic('grip')}</span><span class="cx">{@render ic('cmdx')}</span><span class="cw">{@render ic('wrench')}</span></div>
    <div class="cmdi"><span class="ci">{@render ic('cmdic')}</span><i class="ar a7 dk"></i><span class="ph">键入命令</span><i class="ar a8up"></i></div>
   </div>
  </div>
 </main>

 <footer class="status">
  <span class="hamb st">{@render ic('hamb')}</span>
  <span class="lmodel">模型</span>
  <span class="lt1">布局1</span><i class="slash"></i>
  <span class="lt2">布局2</span><i class="slash"></i>
  <span class="lplus">{@render ic('plus')}</span><i class="slash"></i>
  <div class="coords">1665.9461, 766.2157, 0.0000</div>
  {#each status as g}
   <div class="sgroup" style:margin-left="{g.gap}px">
    {#each g.items as it}
     <span class="sit" class:on={it.on} class:left={it.left} class:lbl={it.label} style:width="{it.w}px">
      {#if it.i}{@render ic(it.i)}{:else if it.ar}<i class="ar a9"></i>{:else if it.text}{it.text}{:else if it.label}{it.label}{/if}
     </span>
    {/each}
   </div>
  {/each}
 </footer>

 <aside class="tip">
  <i class="tiparrow"></i>
  <svg class="tipbulb" width="24" height="36" viewBox="0 0 24 36"><path d="M12 1C5 1 2 6 2 11C2 17 7 20 8 25H16C17 20 22 17 22 11C22 6 19 1 12 1Z" fill="#d6cc8e" stroke="#8a8a80" stroke-width="1.6"/><rect x="8" y="25" width="8" height="8" fill="#7c7c7c"/><rect x="10" y="33" width="4" height="2" fill="#555"/></svg>
  <div class="tiptext"><b>Autodesk App Manager</b> 已成功<br>加载。<br><a href="#top">不再显示此消息</a></div>
  <span class="tipclose"><svg width="8" height="8" viewBox="0 0 8 8"><path d="M1 1L7 7M7 1L1 7" stroke="#eee" stroke-width="1.6"/></svg></span>
  <i class="tipdown"></i>
 </aside>
</div>

<style>
:global(body){margin:0;background:#000;overflow:hidden}
.app{position:relative;width:1916px;height:1030px;box-sizing:border-box;background:#222933;border-top:2px solid #0f6d9c;border-bottom:3px solid #0f6d9c;border-left:1px solid #0f6d9c;border-right:3px solid #17618a;display:flex;flex-direction:column;overflow:hidden;color:#e2e4e8;font:15px/1.2 "Open Sans","Noto Sans CJK SC",sans-serif}
.i{display:block;flex:none}
.ar{display:inline-block;width:0;height:0;border-style:solid;border-color:#c8ccd2 transparent transparent;flex:none}
.a5up{border-width:0 3px 4px;border-color:transparent transparent #555}
.a6{border-width:3px 3px 0}
.a7{border-width:4px 3.5px 0}
.a9{border-width:5px 4.5px 0}
.a10{border-width:5px 5.5px 0}
.dim{border-top-color:#777}
.slot{display:flex;align-items:center;justify-content:center;flex:none}
.up1{margin-top:-2px}
.up2{margin-top:-6px}
.s12{width:12px}.s14{width:14px}.s18{width:18px}.s20{width:20px}.s22{width:22px}.s24{width:24px}.s26{width:26px}.s30{width:30px}.s32{width:32px}.s34{width:34px}.s58{width:58px}
.tbar{height:43px;display:flex;align-items:center;flex:none}
.qat{flex:0 0 652px;display:flex;align-items:center;padding-left:7px;box-sizing:border-box;margin-top:-5px}
.logo{width:29px;height:26px;background:#d3123c;border-bottom:3px solid #97122f;box-sizing:border-box;color:#fff;font:700 19px/22px "Liberation Sans",sans-serif;text-align:center;flex:none}
.first{margin-left:3px}
.sharet{margin-left:1px;color:#9ec9ea;font-size:15px}
.apptitle{flex:0 0 505px;font-size:16px;color:#dfe2e6;margin-top:-5px;white-space:nowrap;word-spacing:.4px}
.rt{width:0;height:0;border-style:solid;border-width:5px 0 5px 5px;border-color:transparent transparent transparent #ddd;margin-top:2px}
.searchbox{width:223px;height:26px;margin:0 0 0 5px;background:#4a5365;color:#aeb3ba;font-style:italic;font-size:14px;line-height:22px;padding-left:2px;box-sizing:border-box;flex:none}
.login{width:100px;margin:-3px 0 0 2px;flex:none}
.vsep{width:1px;height:26px;background:#4b5361}
.help{width:22px;height:22px;border-radius:50%;background:#c9c9c9;color:#777;text-align:center;font:700 15px/22px "Liberation Sans",sans-serif}
.gapw{width:17px;flex:none}

.rtabs{height:25px;display:flex;align-items:stretch;gap:2px;padding-left:8px;flex:none;background:#222933}
.rtab{padding:0 11px;line-height:25px;color:#b9bec6;white-space:nowrap}
.rtab.latin{letter-spacing:.35px}
.rtab.active{background:#3b4453;color:#f0f1f3}
.tabswitch{display:flex;align-items:center;gap:5px;margin-left:27px}
.tsw{width:19px;height:9px;background:#e8e8e8;display:flex;align-items:center;justify-content:center}

.ribbon{height:124px;display:flex;margin-left:5px;width:1903px;background:#3b4453;flex:none}
.panel{display:flex;flex-direction:column;border-right:1px solid #2a313c;box-sizing:border-box;flex:none;position:relative}
.panel:last-child{border-right:0}
.body{height:97px;box-sizing:border-box;padding-top:4px;display:grid;grid-template-rows:repeat(3,31px)}
.ptitle{height:27px;padding-top:2px;box-sizing:border-box;line-height:22px;display:flex;justify-content:center;align-items:center;gap:8px;position:relative;color:#dfe2e6}
.launch{position:absolute;right:4px;font-size:11px;color:#c3c7cd}
.lg{grid-row:1/4;display:flex;flex-direction:column;align-items:center;white-space:nowrap;position:relative}
.lgi{height:48px;display:flex;align-items:center;justify-content:center}
.lb{line-height:20px;text-align:center}
.lg .ar{margin-top:3px}
.smcol{grid-row:1/4;display:grid;grid-template-rows:repeat(3,31px)}
.ctr{justify-items:center;align-items:center}
.sm{display:flex;align-items:center;height:31px;white-space:nowrap}
.si{width:24px;height:24px;display:flex;align-items:center;justify-content:center;flex:none}
.sl{margin-left:5px}
.sa{margin-left:14px}
.sa.near{margin-left:10px}
.far{margin-left:9px}

.draw{width:263px}.draw .body{grid-template-columns:52px 50px 50px 56px 55px}
.draw .smcol{padding-left:4px}
.modify{width:284px}.modify .body{grid-template-columns:81px 74px 94px 35px}
.modify .sm:nth-child(4n+1){padding-left:6px}
.annot{width:196px}.annot .body{grid-template-columns:64px 42px 90px}
.annot .smcol{padding-left:6px}
.layers{width:315px}.layers .body{grid-template-columns:50px 1fr}
.combo{display:flex;align-items:center;position:relative;background:#4a5365;border:1px solid #2e3541;box-sizing:border-box;width:171px;font-size:15px;color:#d4d7dc;align-self:center;white-space:nowrap}
.combo.layercombo{width:259px;margin-left:2px}
.layercombo :global(.i:first-child){margin-left:2px}
.lrow{display:flex;align-items:center}
.lslot{width:30px;display:flex;justify-content:center;flex:none}
.ll{margin-left:3px}
.block{width:196px}.block .body{grid-template-columns:54px 66px 76px}
.block .smcol{padding-left:5px}
.block .sl{margin-left:7px}
.block .sa{margin-left:8px}
.detarr{position:absolute;right:0;top:68px}
.props{width:251px}.props .body{grid-template-columns:52px 23px 172px}
.c26{height:26px}.c27{height:27px}.c28{height:28px}
.swatch{background:#fff;display:block;flex:none}
.s20w{width:20px;height:20px;margin:0 6px 0 8px}
.s18w{width:18px;height:18px;margin:0 8px 0 3px}
.cline{width:80px;height:1px;background:#e6e6e6;margin:0 2px 0 8px;flex:none}
.end{position:absolute;right:4px;top:10px}
.group{width:85px}.group .body{grid-template-columns:50px 34px}
.gs{width:29px;height:27px;display:flex;align-items:center;justify-content:center;box-sizing:border-box}
.gs.sel{border:1px solid #6ba5d6;background:#34506b}
.util{width:94px}.util .body{grid-template-columns:62px 24px}
.clip{width:109px}.clip .body{grid-template-columns:67px 42px}
.view{width:110px}.view .body{grid-template-columns:78px}
.clip .ptitle{justify-content:flex-start;padding-left:33px}
.clip .sa{margin-left:5px}
.view .ptitle{justify-content:flex-start;padding-left:7px}
.view .launch{right:40px}
.props .ptitle{justify-content:flex-start;padding-left:93px}

.doctabs{height:32px;display:flex;align-items:center;flex:none;background:#222933;padding-top:1px;box-sizing:border-box}
.hamb{width:20px;margin-left:24px;display:block}
.slash{width:1px;height:22px;background:#4a5260;transform:skewX(-18deg);flex:none;display:block}
.doctabs>.slash:nth-child(2){margin-left:17px}
.dt{margin-left:14px;color:#d6d9de;flex:none}
.dactive{margin-left:11px;width:128px;height:31px;background:#2d3541;clip-path:polygon(11px 0,100% 0,117px 100%,0 100%);display:flex;align-items:center;flex:none;box-sizing:border-box;padding-left:20px;color:#eceef0}
.dactive b{font-weight:600;font-size:15.5px}
.dactive em{font-style:normal;margin-left:10px;font-size:20px;color:#b8bcc3}
.dplus{margin-left:11px;flex:none}
.dplus+.slash{margin-left:16px}

.frame{flex:1;background:#3b4453;padding:6px 3px 4px 4px;margin-right:3px;min-height:0;display:flex}
.canvas{position:relative;flex:1;background:#000;overflow:hidden}
.vlabel{position:absolute;left:3px;top:6px;font-size:15.5px;letter-spacing:.3px;color:#d8d8d8;white-space:nowrap}
.vctl{position:absolute;right:14px;top:13px;display:flex;align-items:center;gap:13px}
.vmin{display:block;width:12px;height:4px;background:#eee;margin-top:5px}
.vres{display:block;width:8px;height:8px;border:2px solid #eee;box-shadow:2px -2px 0 #bbb}
.chv{position:absolute;left:1373px;top:0;width:1px;height:700px;background:#e4e4e4}
.chh{position:absolute;left:892px;top:219px;width:961px;height:1px;background:#e4e4e4}
.pick{position:absolute;left:1370px;top:216px;width:5px;height:5px;border:1px solid #fff;background:#000}
.cube{position:absolute;left:1744px;top:47px;width:140px;height:140px}
.ring{position:absolute;inset:7px;border-radius:50%;border:13px solid #333;box-sizing:border-box}
.face{position:absolute;left:42px;top:42px;width:55px;height:55px;background:#9b9b9b;display:flex;align-items:center;justify-content:center}
.facein{width:34px;height:34px;background:#a4a9a9;color:#666;font-size:28px;line-height:34px;text-align:center}
.dir{position:absolute;font-size:20px;line-height:24px;color:#9a9a9a;width:24px;text-align:center}
.dir.n{left:58px;top:0}.dir.s{left:58px;top:120px}.dir.w{left:-2px;top:59px}.dir.e{left:118px;top:59px}
.wcs{position:absolute;left:1786px;top:210px;width:56px;height:19px;border-radius:4px;background:#8b8b93;color:#69696f;font:14px/19px "Liberation Sans",sans-serif;padding-left:6px;box-sizing:border-box;letter-spacing:.5px}
.navbar{position:absolute;left:1858px;top:261px}
.ucs{position:absolute;left:15px;top:668px;overflow:visible}
.axis{font:300 24px "Roboto",sans-serif;fill:#eee}
.hist{position:absolute;left:460px;top:648px;display:flex;flex-direction:column;gap:6px}
.hist span{width:46px;height:18px;background:#1b1b1b;color:#4b4b4b;font-size:15px;line-height:18px;text-align:center}
.cmd{position:absolute;left:381px;top:718px;height:33px;display:flex}
.cmdh{width:72px;background:#242a34;display:flex;align-items:center;border-radius:4px 0 0 0;flex:none}
.cg{margin-left:6px}.cx{margin-left:9px}.cw{margin-left:10px}
.cmdi{width:1068px;margin-top:1px;background:#b0b0b0;border-radius:3px;display:flex;align-items:center;position:relative;flex:none}
.ci{margin-left:5px}
.dk{border-top-color:#555;margin-left:2px}
.ph{margin-left:12px;font-style:italic;color:#777;font-size:16px;margin-top:-3px}
.a8up{border-width:0 4.5px 6px;border-color:transparent transparent #555;position:absolute;right:6px;top:13px}

.status{height:39px;display:flex;align-items:center;flex:none;background:#222933;padding-bottom:3px;box-sizing:border-box}
.hamb.st{margin-left:24px}
.lmodel{margin-left:11px;width:70px;height:30px;background:#3b4453;clip-path:polygon(11px 0,100% 0,59px 100%,0 100%);line-height:30px;text-align:center;flex:none;padding-left:1px;box-sizing:border-box;color:#f0f1f3}
.lt1{margin-left:11px;flex:none}
.status .slash{margin-left:15px}
.lt2{margin-left:17px;flex:none}
.status .lplus{margin-left:17px;width:18px;flex:none}
.coords{margin-left:82px;width:225px;height:30px;background:#3b4453;line-height:30px;text-align:right;padding-right:10px;box-sizing:border-box;font-size:14px;letter-spacing:-.15px;flex:none;white-space:nowrap}
.sgroup{height:30px;display:flex;background:#3b4453;flex:none}
.sit{height:30px;display:flex;align-items:center;justify-content:center;flex:none;font-size:15px;white-space:nowrap}
.sit.lbl{font-size:14px;letter-spacing:-.3px}
.sit.on{background:#5c8fc8}
.sit.left{justify-content:flex-start}

.tip{position:absolute;left:1404px;top:45px;width:311px;height:86px;background:rgba(208,208,208,.88);border-radius:6px;color:#111}
.tiparrow{position:absolute;left:267px;top:-14px;width:0;height:0;border-style:solid;border-width:0 14px 14px;border-color:transparent transparent rgba(208,208,208,.88)}
.tipbulb{position:absolute;left:10px;top:9px}
.tiptext{position:absolute;left:45px;top:12px;font-size:14.5px;line-height:20px;color:#111;white-space:nowrap}
.tiptext b{font-weight:600;font-size:15.7px}
.tiptext a{color:#1a1ad0}
.tipclose{position:absolute;left:288px;top:7px;width:14px;height:14px;border-radius:50%;background:#555;display:flex;align-items:center;justify-content:center}
.tipdown{position:absolute;left:281px;top:63px;width:0;height:0;border-style:solid;border-width:11px 8px 0;border-color:#444 transparent transparent}
</style>
